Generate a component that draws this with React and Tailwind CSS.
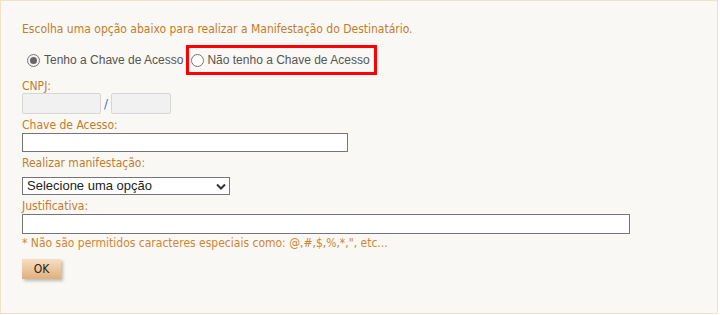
import React from 'react';

const label = "block text-[12px] leading-[14px] text-[#c27c2c] [font-family:'DejaVu_Sans_Condensed','DejaVu_Sans',sans-serif]";

export default function App() {
  return (
    <div className="w-[720px] h-[315px] bg-white">
      <div className="w-[718px] h-[314px] border border-[#f3e1c6] bg-[#faf8f4] pl-[21px] pt-[21px]">
        <p className={label}>
          Escolha uma opção abaixo para realizar a Manifestação do Destinatário.
        </p>

        <div className="flex items-center mt-[9px] h-[30px] [font-family:'Liberation_Sans',Arial,sans-serif] text-[12px] text-[#555]">
          <label className="flex items-center gap-[4px] pl-[5px] pr-[3px]">
            <span className="w-[13px] h-[13px] rounded-full border border-[#777] bg-[#f3f3f3] flex items-center justify-center">
              <span className="w-[7px] h-[7px] rounded-full bg-[#666]" />
            </span>
            Tenho a Chave de Acesso
          </label>
          <label className="flex items-center gap-[3px] h-[30px] border-[3px] border-[#f00] pl-[2px] pr-[4px]">
            <span className="w-[13px] h-[13px] rounded-full border border-[#777] bg-white" />
            Não tenho a Chave de Acesso
          </label>
        </div>

        <span className={label + " mt-[4px]"}>CNPJ:</span>
        <div className="flex items-center">
          <div className="w-[79px] h-[21px] rounded-[2px] border border-[#d6d6d6] bg-[#f1f1f1]" />
          <span className="mx-[3px] text-[12px] text-[#4a6fa5] [font-family:'DejaVu_Sans',sans-serif]">/</span>
          <div className="w-[60px] h-[21px] rounded-[2px] border border-[#d6d6d6] bg-[#f1f1f1]" />
        </div>

        <span className={label + " mt-[4px]"}>Chave de Acesso:</span>
        <div className="w-[326px] h-[19px] mt-[1px] border border-[#767676] bg-white" />

        <span className={label + " mt-[4px]"}>Realizar manifestação:</span>
        <div className="w-[208px] h-[18px] mt-[7px] border border-[#767676] bg-white flex items-center justify-between pl-[4px] pr-[3px] [font-family:'Liberation_Sans',Arial,sans-serif] text-[13px] text-[#222]">
          <span>Selecione uma opção</span>
          <svg width="10" height="7" viewBox="0 0 10 7">
            <path d="M1 1.5 L5 5.5 L9 1.5" fill="none" stroke="#333" strokeWidth="2" />
          </svg>
        </div>

        <span className={label + " mt-[4px]"}>Justificativa:</span>
        <div className="w-[608px] h-[20px] mt-[1px] border border-[#767676] bg-white" />
        <p className={label + " mt-[2px] text-[#cd8633]"}>
          * Não são permitidos caracteres especiais como: @,#,$,%,*,", etc...
        </p>

        <button className="mt-[9px] w-[39px] h-[20px] bg-gradient-to-b from-[#f6dfc3] to-[#e0af7c] shadow-[2px_2px_3px_rgba(0,0,0,0.25)] text-[12px] text-[#222] [font-family:'DejaVu_Sans_Condensed','DejaVu_Sans',sans-serif]">
          OK
        </button>
      </div>
    </div>
  );
}
